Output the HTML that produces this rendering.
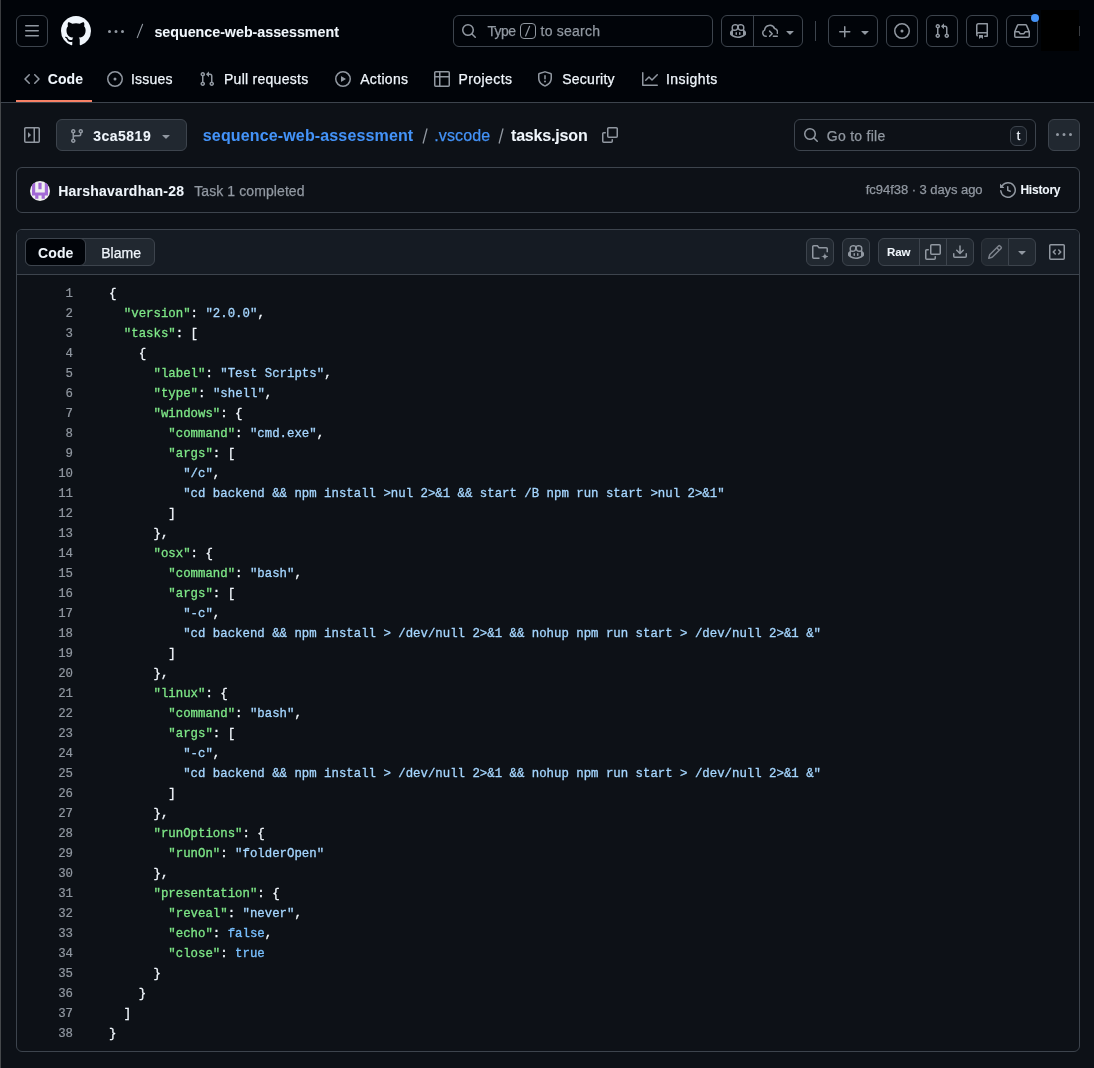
<!DOCTYPE html>
<html><head><meta charset="utf-8"><style>
html,body{margin:0;padding:0;}
body{width:1094px;height:1068px;background:#0d1117;position:relative;overflow:hidden;font-family:"Liberation Sans",sans-serif;}
.b,.t,.ic{position:absolute;}
.t{white-space:pre;}
.ln{position:absolute;left:40px;top:284px;width:33px;text-align:right;font-family:"Liberation Mono",monospace;font-size:12.37px;line-height:20px;color:#9198a1;-webkit-text-stroke:0.2px currentColor;}
.code{position:absolute;left:109px;top:284px;font-family:"Liberation Mono",monospace;font-size:12.37px;line-height:20px;color:#f0f6fc;white-space:pre;-webkit-text-stroke:0.3px currentColor;}
.k{color:#7ee787} .s{color:#a5d6ff} .c{color:#79c0ff}
.edge{position:absolute;left:0;top:0;width:1px;height:1068px;background:linear-gradient(#3b3d40 0,#3b3d40 102px,#45484b 102px)}
</style></head><body><div id="wrap" style="position:absolute;left:0;top:0;width:1094px;height:1068px;will-change:transform">
<div class="b" style="left:0;top:0;width:1094px;height:102px;background:#010409"></div><div class="b" style="left:0;top:102px;width:1094px;height:1px;background:#3d444d"></div><div class="b" style="left:16px;top:15px;width:32px;height:32px;background:transparent;border:1px solid #3d444d;border-radius:6px;box-sizing:border-box;"></div><svg class="ic" style="left:24px;top:23px;width:16px;height:16px;fill:#9198a1;color:#9198a1;" viewBox="0 0 16 16"><path d="M1 2.75A.75.75 0 0 1 1.75 2h12.5a.75.75 0 0 1 0 1.5H1.75A.75.75 0 0 1 1 2.75Zm0 5A.75.75 0 0 1 1.75 7h12.5a.75.75 0 0 1 0 1.5H1.75A.75.75 0 0 1 1 7.75ZM1.75 12h12.5a.75.75 0 0 1 0 1.5H1.75a.75.75 0 0 1 0-1.5Z"/></svg><svg class="ic" style="left:61px;top:16px;width:30px;height:30px;fill:#f0f6fc;color:#f0f6fc;" viewBox="0 0 16 16"><path d="M8 0c4.42 0 8 3.58 8 8a8.013 8.013 0 0 1-5.45 7.59c-.4.08-.55-.17-.55-.38 0-.27.01-1.13.01-2.2 0-.75-.25-1.230-.54-1.48 1.78-.2 3.65-.88 3.650-3.95 0-.88-.31-1.59-.82-2.15.08-.2.36-1.02-.08-2.12 0 0-.67-.22-2.2.82-.64-.18-1.32-.27-2-.27-.68 0-1.36.09-2 .27-1.53-1.03-2.2-.82-2.2-.82-.44 1.1-.16 1.92-.08 2.12-.51.56-.82 1.28-.82 2.15 0 3.06 1.86 3.75 3.64 3.95-.23.2-.44.55-.51 1.07-.46.21-1.610.55-2.33-.66-.15-.24-.6-.83-1.23-.82-.67.01-.27.38.01.53.34.19.73.9.82 1.13.16.45.68 1.31 2.69.94 0 .67.01 1.3.01 1.49 0 .21-.15.45-.55.38A7.995 7.995 0 0 1 0 8c0-4.42 3.58-8 8-8Z"/></svg><svg class="ic" style="left:108px;top:23.6px;width:16px;height:16px;fill:#9198a1;color:#9198a1;" viewBox="0 0 16 16"><path d="M8 9a1.5 1.5 0 1 0 0-3 1.5 1.5 0 0 0 0 3ZM1.5 9a1.5 1.5 0 1 0 0-3 1.5 1.5 0 0 0 0 3Zm13 0a1.5 1.5 0 1 0 0-3 1.5 1.5 0 0 0 0 3Z"/></svg><svg class="ic" style="left:130px;top:20px;width:20px;height:22px" viewBox="0 0 20 22"><path d="M7.3 17.6L12.6 4.3" stroke="#9198a1" stroke-width="1.1" stroke-linecap="round"/></svg><div id="t0" class="t" style="left:154.40px;top:25px;font-size:14.3px;line-height:14.3px;font-weight:700;color:#f0f6fc;letter-spacing:-0.027px;-webkit-text-stroke:0.05px currentColor;">sequence-web-assessment</div><div class="b" style="left:453px;top:15px;width:260px;height:32px;background:transparent;border:1px solid #3d444d;border-radius:6px;box-sizing:border-box;"></div><svg class="ic" style="left:461px;top:23px;width:16px;height:16px;fill:#9198a1;color:#9198a1;" viewBox="0 0 16 16"><path d="M10.68 11.74a6 6 0 0 1-7.922-8.982 6 6 0 0 1 8.982 7.922l3.04 3.04a.749.749 0 0 1-.326 1.275.749.749 0 0 1-.734-.215ZM11.5 7a4.499 4.499 0 1 0-8.997 0A4.499 4.499 0 0 0 11.5 7Z"/></svg><div id="t1" class="t" style="left:487.40px;top:24px;font-size:14px;line-height:14px;font-weight:400;color:#9198a1;letter-spacing:-0.600px;-webkit-text-stroke:0.25px currentColor;">Type</div><div class="b" style="left:520px;top:23px;width:16px;height:16px;background:transparent;border:1px solid #9198a1;border-radius:4px;box-sizing:border-box;"></div><svg class="ic" style="left:520px;top:23px;width:16px;height:16px" viewBox="0 0 16 16"><path d="M5.6 13L9.6 3.3" stroke="#9198a1" stroke-width="1.2" stroke-linecap="round"/></svg><div id="t2" class="t" style="left:540.60px;top:24px;font-size:14px;line-height:14px;font-weight:400;color:#9198a1;letter-spacing:0.225px;-webkit-text-stroke:0.25px currentColor;">to search</div><div class="b" style="left:721px;top:15px;width:82px;height:32px;background:transparent;border:1px solid #3d444d;border-radius:6px;box-sizing:border-box;"></div><div class="b" style="left:753px;top:15px;width:1px;height:32px;background:#3d444d"></div><svg class="ic" style="left:730px;top:23px;width:16px;height:16px;fill:#9198a1;color:#9198a1;" viewBox="0 0 16 16"><path d="M7.998 15.035c-4.562 0-7.873-2.914-7.998-3.749V9.338c.085-.628.677-1.686 1.588-2.065.013-.07.024-.143.036-.218.029-.183.06-.384.126-.612-.201-.508-.254-1.084-.254-1.656 0-.87.128-1.769.693-2.484.579-.733 1.494-1.124 2.724-1.261 1.206-.134 2.262.034 2.944.765.05.053.096.108.139.165.044-.057.094-.112.143-.165.682-.731 1.738-.899 2.944-.765 1.23.137 2.145.528 2.724 1.261.566.715.693 1.614.693 2.484 0 .572-.053 1.148-.254 1.656.066.228.098.429.126.612.012.076.024.148.037.218.924.385 1.522 1.471 1.591 2.095v1.872c0 .766-3.351 3.795-8.002 3.795Zm0-1.485c2.28 0 4.584-1.11 5.002-1.433V7.862l-.023-.116c-.49.21-1.075.291-1.727.291-1.146 0-2.059-.327-2.71-.991A3.222 3.222 0 0 1 8 6.303a3.24 3.24 0 0 1-.544.743c-.65.664-1.563.991-2.71.991-.652 0-1.236-.081-1.727-.291l-.023.116v4.255c.419.323 2.722 1.433 5.002 1.433ZM6.762 2.83c-.193-.206-.637-.413-1.682-.297-1.019.113-1.479.404-1.713.7-.247.312-.369.789-.369 1.554 0 .793.129 1.171.308 1.371.162.181.519.379 1.442.379.853 0 1.339-.235 1.638-.54.315-.322.527-.827.617-1.553.117-.935-.037-1.395-.241-1.614Zm4.155-.297c-1.044-.116-1.488.091-1.681.297-.204.219-.359.679-.242 1.614.091.726.303 1.231.618 1.553.299.305.784.54 1.638.54.922 0 1.28-.198 1.442-.379.179-.2.308-.578.308-1.371 0-.765-.123-1.242-.37-1.554-.233-.296-.693-.587-1.713-.7Z"/><path d="M6.25 9.037a.75.75 0 0 1 .75.75v1.501a.75.75 0 0 1-1.5 0V9.787a.75.75 0 0 1 .75-.75Zm4.25.75v1.501a.75.75 0 0 1-1.5 0V9.787a.75.75 0 0 1 1.5 0Z"/></svg><svg class="ic" style="left:762px;top:24px;width:16px;height:16px;fill:#9198a1;color:#9198a1;" viewBox="0 0 16 16"><g style="fill:none;stroke:currentColor;stroke-width:1.5;stroke-linecap:round;stroke-linejoin:round"><path d="M4.25 12.25A3.25 3.25 0 0 1 2.6 6.1A5.2 5.2 0 0 1 12.6 4.6A3.4 3.4 0 0 1 15.3 9.2"/><path d="M7.6 7.1L10.2 9.7L7.6 12.3"/><path d="M11.4 12.25H15.25"/></g></svg><svg class="ic" style="left:782px;top:24px;width:16px;height:16px;fill:#9198a1;color:#9198a1;" viewBox="0 0 16 16"><path d="m4.427 7.427 3.396 3.396a.25.25 0 0 0 .354 0l3.396-3.396A.25.25 0 0 0 11.396 7H4.604a.25.25 0 0 0-.177.427Z"/></svg><div class="b" style="left:815px;top:21px;width:1px;height:20px;background:#3d444d"></div><div class="b" style="left:828px;top:15px;width:50px;height:32px;background:transparent;border:1px solid #3d444d;border-radius:6px;box-sizing:border-box;"></div><svg class="ic" style="left:837px;top:24px;width:16px;height:16px;fill:#9198a1;color:#9198a1;" viewBox="0 0 16 16"><path d="M7.75 2a.75.75 0 0 1 .75.75V7h4.25a.75.75 0 0 1 0 1.5H8.5v4.25a.75.75 0 0 1-1.5 0V8.5H2.75a.75.75 0 0 1 0-1.5H7V2.75A.75.75 0 0 1 7.75 2Z"/></svg><svg class="ic" style="left:857px;top:24px;width:16px;height:16px;fill:#9198a1;color:#9198a1;" viewBox="0 0 16 16"><path d="m4.427 7.427 3.396 3.396a.25.25 0 0 0 .354 0l3.396-3.396A.25.25 0 0 0 11.396 7H4.604a.25.25 0 0 0-.177.427Z"/></svg><div class="b" style="left:886px;top:15px;width:32px;height:32px;background:transparent;border:1px solid #3d444d;border-radius:6px;box-sizing:border-box;"></div><svg class="ic" style="left:894px;top:23px;width:16px;height:16px;fill:#9198a1;color:#9198a1;" viewBox="0 0 16 16"><path d="M8 9.5a1.5 1.5 0 1 0 0-3 1.5 1.5 0 0 0 0 3Z"/><path d="M8 0a8 8 0 1 1 0 16A8 8 0 0 1 8 0ZM1.5 8a6.5 6.5 0 1 0 13 0 6.5 6.5 0 0 0-13 0Z"/></svg><div class="b" style="left:926px;top:15px;width:32px;height:32px;background:transparent;border:1px solid #3d444d;border-radius:6px;box-sizing:border-box;"></div><svg class="ic" style="left:934px;top:23px;width:16px;height:16px;fill:#9198a1;color:#9198a1;" viewBox="0 0 16 16"><path d="M1.5 3.25a2.25 2.25 0 1 1 3 2.122v5.256a2.251 2.251 0 1 1-1.5 0V5.372A2.25 2.25 0 0 1 1.5 3.25Zm5.677-.177L9.573.677A.25.25 0 0 1 10 .854V2.5h1A2.5 2.5 0 0 1 13.5 5v5.628a2.251 2.251 0 1 1-1.5 0V5a1 1 0 0 0-1-1h-1v1.646a.25.25 0 0 1-.427.177L7.177 3.427a.25.25 0 0 1 0-.354ZM3.75 2.5a.75.75 0 1 0 0 1.5.75.75 0 0 0 0-1.5Zm0 9.5a.75.75 0 1 0 0 1.5.75.75 0 0 0 0-1.5Zm8.25.75a.75.75 0 1 0 1.5 0 .75.75 0 0 0-1.5 0Z"/></svg><div class="b" style="left:966px;top:15px;width:32px;height:32px;background:transparent;border:1px solid #3d444d;border-radius:6px;box-sizing:border-box;"></div><svg class="ic" style="left:974px;top:23px;width:16px;height:16px;fill:#9198a1;color:#9198a1;" viewBox="0 0 16 16"><path d="M2 2.5A2.5 2.5 0 0 1 4.5 0h8.75a.75.75 0 0 1 .75.75v12.5a.75.75 0 0 1-.75.75h-2.5a.75.75 0 0 1 0-1.5h1.75v-2h-8a1 1 0 0 0-.714 1.7.75.75 0 1 1-1.072 1.05A2.495 2.495 0 0 1 2 11.5Zm10.5-1h-8a1 1 0 0 0-1 1v6.708A2.486 2.486 0 0 1 4.5 9h8ZM5 12.25a.25.25 0 0 1 .25-.25h3.5a.25.25 0 0 1 .25.25v3.25a.25.25 0 0 1-.4.2l-1.45-1.087a.249.249 0 0 0-.3 0L5.4 15.7a.25.25 0 0 1-.4-.2Z"/></svg><div class="b" style="left:1006px;top:15px;width:32px;height:32px;background:transparent;border:1px solid #3d444d;border-radius:6px;box-sizing:border-box;"></div><svg class="ic" style="left:1014px;top:23px;width:16px;height:16px;fill:#9198a1;color:#9198a1;" viewBox="0 0 16 16"><path d="M2.8 2.06A1.75 1.75 0 0 1 4.41 1h7.18c.7 0 1.333.417 1.61 1.06l2.74 6.395c.04.093.06.194.06.295v4.5A1.75 1.75 0 0 1 14.25 15H1.75A1.75 1.75 0 0 1 0 13.250v-4.5c0-.101.02-.202.06-.295Zm1.61.44a.25.25 0 0 0-.23.152L1.887 8H4.75a.75.75 0 0 1 .6.3L6.625 10h2.75l1.275-1.7a.75.75 0 0 1 .6-.3h2.863L11.82 2.652a.25.25 0 0 0-.23-.152Zm10.09 7h-2.875l-1.275 1.7a.75.75 0 0 1-.6.3h-3.5a.75.75 0 0 1-.6-.3L4.375 9.5H1.5v3.75c0 .138.112.25.25.25h12.5a.25.25 0 0 0 .25-.25Z"/></svg><div class="b" style="left:1031px;top:14px;width:8px;height:8px;background:#4493f8;border-radius:50%;"></div><div class="b" style="left:1041px;top:10px;width:38px;height:41px;background:#000"></div><div class="b" style="left:1079px;top:26px;width:1px;height:10px;background:#3a3d42"></div><svg class="ic" style="left:24px;top:71px;width:16px;height:16px;fill:#9198a1;color:#9198a1;" viewBox="0 0 16 16"><path d="m11.28 3.22 4.25 4.25a.75.75 0 0 1 0 1.060l-4.25 4.25a.749.749 0 0 1-1.275-.326.749.749 0 0 1 .215-.734L13.94 8l-3.72-3.72a.749.749 0 0 1 .326-1.275.749.749 0 0 1 .734.215Zm-6.56 0a.751.751 0 0 1 1.042.018.751.751 0 0 1 .018 1.042L2.06 8l3.72 3.72a.749.749 0 0 1-.326 1.275.749.749 0 0 1-.734-.215L.47 8.53a.75.75 0 0 1 0-1.06Z"/></svg><div id="t3" class="t" style="left:47.80px;top:72px;font-size:14px;line-height:14px;font-weight:700;color:#f0f6fc;letter-spacing:0.067px;-webkit-text-stroke:0.05px currentColor;">Code</div><svg class="ic" style="left:107px;top:71px;width:16px;height:16px;fill:#9198a1;color:#9198a1;" viewBox="0 0 16 16"><path d="M8 9.5a1.5 1.5 0 1 0 0-3 1.5 1.5 0 0 0 0 3Z"/><path d="M8 0a8 8 0 1 1 0 16A8 8 0 0 1 8 0ZM1.5 8a6.5 6.5 0 1 0 13 0 6.5 6.5 0 0 0-13 0Z"/></svg><div id="t4" class="t" style="left:131.00px;top:72px;font-size:14px;line-height:14px;font-weight:400;color:#f0f6fc;letter-spacing:0.200px;-webkit-text-stroke:0.25px currentColor;">Issues</div><svg class="ic" style="left:199px;top:71px;width:16px;height:16px;fill:#9198a1;color:#9198a1;" viewBox="0 0 16 16"><path d="M1.5 3.25a2.25 2.25 0 1 1 3 2.122v5.256a2.251 2.251 0 1 1-1.5 0V5.372A2.25 2.25 0 0 1 1.5 3.25Zm5.677-.177L9.573.677A.25.25 0 0 1 10 .854V2.5h1A2.5 2.5 0 0 1 13.5 5v5.628a2.251 2.251 0 1 1-1.5 0V5a1 1 0 0 0-1-1h-1v1.646a.25.25 0 0 1-.427.177L7.177 3.427a.25.25 0 0 1 0-.354ZM3.75 2.5a.75.75 0 1 0 0 1.5.75.75 0 0 0 0-1.5Zm0 9.5a.75.75 0 1 0 0 1.5.75.75 0 0 0 0-1.5Zm8.25.75a.75.75 0 1 0 1.5 0 .75.75 0 0 0-1.5 0Z"/></svg><div id="t5" class="t" style="left:224.00px;top:72px;font-size:14px;line-height:14px;font-weight:400;color:#f0f6fc;letter-spacing:0.267px;-webkit-text-stroke:0.25px currentColor;">Pull requests</div><svg class="ic" style="left:335px;top:71px;width:16px;height:16px;fill:#9198a1;color:#9198a1;" viewBox="0 0 16 16"><path d="M8 0a8 8 0 1 1 0 16A8 8 0 0 1 8 0ZM1.5 8a6.5 6.5 0 1 0 13 0 6.5 6.5 0 0 0-13 0Zm4.879-2.773 4.264 2.559a.25.25 0 0 1 0 .428l-4.264 2.559A.25.25 0 0 1 6 10.559V5.442a.25.25 0 0 1 .379-.215Z"/></svg><div id="t6" class="t" style="left:360.20px;top:72px;font-size:14px;line-height:14px;font-weight:400;color:#f0f6fc;letter-spacing:0.333px;-webkit-text-stroke:0.25px currentColor;">Actions</div><svg class="ic" style="left:434px;top:71px;width:16px;height:16px;fill:#9198a1;color:#9198a1;" viewBox="0 0 16 16"><path d="M0 1.75C0 .784.784 0 1.75 0h12.5C15.216 0 16 .784 16 1.75v12.5A1.75 1.75 0 0 1 14.25 16H1.75A1.75 1.75 0 0 1 0 14.25ZM6.5 6.5v8h7.75a.25.25 0 0 0 .25-.25V6.5Zm8-1.5V1.75a.25.25 0 0 0-.25-.25H6.5V5Zm-13 1.5v7.75c0 .138.112.25.25.25H5v-8ZM5 5V1.5H1.75a.25.25 0 0 0-.25.25V5Z"/></svg><div id="t7" class="t" style="left:458.50px;top:72px;font-size:14px;line-height:14px;font-weight:400;color:#f0f6fc;letter-spacing:0.429px;-webkit-text-stroke:0.25px currentColor;">Projects</div><svg class="ic" style="left:537px;top:71px;width:16px;height:16px;fill:#9198a1;color:#9198a1;" viewBox="0 0 16 16"><path d="M7.467.133a1.748 1.748 0 0 1 1.066 0l5.25 1.68A1.75 1.75 0 0 1 15 3.48V7c0 1.566-.32 3.182-1.303 4.682-.983 1.498-2.585 2.813-5.032 3.855a1.697 1.697 0 0 1-1.33 0c-2.447-1.042-4.049-2.357-5.032-3.855C1.32 10.182 1 8.566 1 7V3.48a1.755 1.755 0 0 1 1.217-1.667Zm.61 1.429a.25.25 0 0 0-.153 0l-5.25 1.68a.25.25 0 0 0-.174.238V7c0 1.358.275 2.666 1.057 3.86.784 1.194 2.121 2.34 4.366 3.297a.196.196 0 0 0 .154 0c2.245-.956 3.582-2.104 4.366-3.298C13.225 9.666 13.5 8.36 13.5 7V3.48a.251.251 0 0 0-.174-.237l-5.25-1.68ZM8.75 4.75v3a.75.75 0 0 1-1.5 0v-3a.75.75 0 0 1 1.5 0ZM9 10.5a1 1 0 1 1-2 0 1 1 0 0 1 2 0Z"/></svg><div id="t8" class="t" style="left:562.20px;top:72px;font-size:14px;line-height:14px;font-weight:400;color:#f0f6fc;letter-spacing:0.257px;-webkit-text-stroke:0.25px currentColor;">Security</div><svg class="ic" style="left:642px;top:71px;width:16px;height:16px;fill:#9198a1;color:#9198a1;" viewBox="0 0 16 16"><path d="M1.5 1.75V13.5h13.75a.75.75 0 0 1 0 1.5H.75a.75.75 0 0 1-.75-.75V1.75a.75.75 0 0 1 1.5 0Zm14.28 2.53-5.25 5.25a.75.75 0 0 1-1.06 0L7 7.060 4.28 9.78a.751.751 0 0 1-1.042-.018.751.751 0 0 1-.018-1.042l3.25-3.25a.75.75 0 0 1 1.06 0L10 7.94l4.72-4.72a.751.751 0 0 1 1.042.018.751.751 0 0 1 .018 1.042Z"/></svg><div id="t9" class="t" style="left:666.00px;top:72px;font-size:14px;line-height:14px;font-weight:400;color:#f0f6fc;letter-spacing:0.429px;-webkit-text-stroke:0.25px currentColor;">Insights</div><div class="b" style="left:16px;top:100px;width:76px;height:2px;background:#f78166"></div><svg class="ic" style="left:24px;top:127px;width:16px;height:16px;fill:#9198a1;color:#9198a1;" viewBox="0 0 16 16"><path d="M6.823 7.823a.25.25 0 0 1 0 .354l-2.396 2.396A.25.25 0 0 1 4 10.396V5.604a.25.25 0 0 1 .427-.177Z"/><path d="M1.75 0h12.5C15.216 0 16 .784 16 1.75v12.5A1.75 1.75 0 0 1 14.25 16H1.75A1.75 1.75 0 0 1 0 14.25V1.75C0 .784.784 0 1.75 0ZM1.5 1.75v12.5c0 .138.112.25.25.25H9.5v-13H1.75a.25.25 0 0 0-.25.25ZM11 14.5h3.25a.25.25 0 0 0 .25-.25V1.750a.25.25 0 0 0-.25-.25H11Z"/></svg><div class="b" style="left:56px;top:119px;width:131px;height:32px;background:#212830;border:1px solid #3d444d;border-radius:6px;box-sizing:border-box;"></div><svg class="ic" style="left:69px;top:128px;width:16px;height:16px;fill:#9198a1;color:#9198a1;" viewBox="0 0 16 16"><path d="M9.5 3.25a2.25 2.25 0 1 1 3 2.122V6A2.5 2.5 0 0 1 10 8.5H6a1 1 0 0 0-1 1v1.128a2.251 2.251 0 1 1-1.5 0V5.372a2.25 2.25 0 1 1 1.5 0v1.836A2.493 2.493 0 0 1 6 7h4a1 1 0 0 0 1-1v-.628A2.25 2.25 0 0 1 9.5 3.25Zm-6 0a.75.75 0 1 0 1.5 0 .75.75 0 0 0-1.5 0Zm8.25-.75a.75.75 0 1 0 0 1.5.75.75 0 0 0 0-1.5ZM4.25 12a.75.75 0 1 0 0 1.5.75.75 0 0 0 0-1.5Z"/></svg><div id="t10" class="t" style="left:93.20px;top:129px;font-size:14px;line-height:14px;font-weight:700;color:#f0f6fc;letter-spacing:0.500px;-webkit-text-stroke:0.05px currentColor;">3ca5819</div><svg class="ic" style="left:158px;top:127.5px;width:16px;height:16px;fill:#9198a1;color:#9198a1;" viewBox="0 0 16 16"><path d="m4.427 7.427 3.396 3.396a.25.25 0 0 0 .354 0l3.396-3.396A.25.25 0 0 0 11.396 7H4.604a.25.25 0 0 0-.177.427Z"/></svg><div id="t11" class="t" style="left:202.80px;top:128px;font-size:16px;line-height:16px;font-weight:700;color:#4493f8;letter-spacing:0.145px;-webkit-text-stroke:0.05px currentColor;">sequence-web-assessment</div><svg class="ic" style="left:417.5px;top:124px;width:14px;height:24px" viewBox="0 0 14 24"><path d="M5.2 19L8.9 5" stroke="#9198a1" stroke-width="1.3" stroke-linecap="round"/></svg><div id="t12" class="t" style="left:434.20px;top:128px;font-size:16px;line-height:16px;font-weight:400;color:#4493f8;letter-spacing:0.133px;-webkit-text-stroke:0.25px currentColor;">.vscode</div><svg class="ic" style="left:494px;top:124px;width:14px;height:24px" viewBox="0 0 14 24"><path d="M5.2 19L8.9 5" stroke="#9198a1" stroke-width="1.3" stroke-linecap="round"/></svg><div id="t13" class="t" style="left:511.00px;top:128px;font-size:16px;line-height:16px;font-weight:700;color:#f0f6fc;letter-spacing:-0.178px;-webkit-text-stroke:0.05px currentColor;">tasks.json</div><svg class="ic" style="left:602px;top:127px;width:16px;height:16px;fill:#9198a1;color:#9198a1;" viewBox="0 0 16 16"><path d="M0 6.75C0 5.784.784 5 1.75 5h1.5a.75.75 0 0 1 0 1.5h-1.5a.25.25 0 0 0-.25.25v7.5c0 .138.112.25.25.25h7.5a.25.25 0 0 0 .25-.25v-1.5a.75.75 0 0 1 1.5 0v1.5A1.75 1.75 0 0 1 9.25 16h-7.5A1.75 1.75 0 0 1 0 14.25Z"/><path d="M5 1.75C5 .784 5.784 0 6.75 0h7.5C15.216 0 16 .784 16 1.75v7.5A1.75 1.75 0 0 1 14.25 11h-7.5A1.75 1.75 0 0 1 5 9.25Zm1.75-.25a.25.25 0 0 0-.25.25v7.5c0 .138.112.25.25.25h7.5a.25.25 0 0 0 .25-.25v-7.5a.25.25 0 0 0-.25-.25Z"/></svg><div class="b" style="left:794px;top:119px;width:242px;height:32px;background:transparent;border:1px solid #3d444d;border-radius:6px;box-sizing:border-box;"></div><svg class="ic" style="left:803px;top:127px;width:16px;height:16px;fill:#9198a1;color:#9198a1;" viewBox="0 0 16 16"><path d="M10.68 11.74a6 6 0 0 1-7.922-8.982 6 6 0 0 1 8.982 7.922l3.04 3.04a.749.749 0 0 1-.326 1.275.749.749 0 0 1-.734-.215ZM11.5 7a4.499 4.499 0 1 0-8.997 0A4.499 4.499 0 0 0 11.5 7Z"/></svg><div id="t14" class="t" style="left:826.80px;top:129px;font-size:14px;line-height:14px;font-weight:400;color:#9198a1;letter-spacing:0.267px;-webkit-text-stroke:0.25px currentColor;">Go to file</div><div class="b" style="left:1010px;top:126px;width:17px;height:20px;background:#151b23;border:1px solid #3d444d;border-radius:6px;box-sizing:border-box;"></div><div id="t15" class="t" style="left:1016.80px;top:130px;font-size:12.5px;line-height:12.5px;font-weight:400;color:#f0f6fc;letter-spacing:0.000px;-webkit-text-stroke:0.25px currentColor;font-family:"Liberation Mono",monospace;">t</div><div class="b" style="left:1048px;top:119px;width:32px;height:32px;background:#212830;border:1px solid #3d444d;border-radius:6px;box-sizing:border-box;"></div><svg class="ic" style="left:1056px;top:127px;width:16px;height:16px;fill:#9198a1;color:#9198a1;" viewBox="0 0 16 16"><path d="M8 9a1.5 1.5 0 1 0 0-3 1.5 1.5 0 0 0 0 3ZM1.5 9a1.5 1.5 0 1 0 0-3 1.5 1.5 0 0 0 0 3Zm13 0a1.5 1.5 0 1 0 0-3 1.5 1.5 0 0 0 0 3Z"/></svg><div class="b" style="left:16px;top:167px;width:1064px;height:46px;background:transparent;border:1px solid #3d444d;border-radius:6px;box-sizing:border-box;"></div><svg class="ic" style="left:30px;top:181px;width:20px;height:20px" viewBox="0 0 20 20"><defs><clipPath id="cc"><circle cx="10" cy="10" r="10"/></clipPath></defs><g clip-path="url(#cc)"><rect width="20" height="20" fill="#f0f0f0"/><path d="M2.00 1.80h3.20v3.20h-3.20ZM8.40 1.80h3.20v3.20h-3.20ZM14.80 1.80h3.20v3.20h-3.20ZM2.00 5.00h3.20v3.20h-3.20ZM8.40 5.00h3.20v3.20h-3.20ZM14.80 5.00h3.20v3.20h-3.20ZM2.00 8.20h3.20v3.20h-3.20ZM14.80 8.20h3.20v3.20h-3.20ZM2.00 11.40h3.20v3.20h-3.20ZM5.20 11.40h3.20v3.20h-3.20ZM8.40 11.40h3.20v3.20h-3.20ZM11.60 11.40h3.20v3.20h-3.20ZM14.80 11.40h3.20v3.20h-3.20ZM5.20 14.60h3.20v3.20h-3.20ZM11.60 14.60h3.20v3.20h-3.20Z" fill="#a36ad6"/></g></svg><div id="t16" class="t" style="left:58.20px;top:184px;font-size:14px;line-height:14px;font-weight:700;color:#f0f6fc;letter-spacing:0.240px;-webkit-text-stroke:0.05px currentColor;">Harshavardhan-28</div><div id="t17" class="t" style="left:194.20px;top:184px;font-size:14px;line-height:14px;font-weight:400;color:#9198a1;letter-spacing:0.093px;-webkit-text-stroke:0.25px currentColor;">Task 1 completed</div><div id="t18" class="t" style="left:865.80px;top:183px;font-size:13px;line-height:13px;font-weight:400;color:#9198a1;letter-spacing:-0.053px;-webkit-text-stroke:0.25px currentColor;">fc94f38 · 3 days ago</div><svg class="ic" style="left:1000px;top:182px;width:16px;height:16px;fill:#9198a1;color:#9198a1;" viewBox="0 0 16 16"><path d="m.427 1.927 1.215 1.215a8.002 8.002 0 1 1-1.6 5.685.75.75 0 1 1 1.493-.154 6.5 6.5 0 1 0 1.18-4.458l1.358 1.358A.25.25 0 0 1 3.896 6H.25A.25.25 0 0 1 0 5.75V2.104a.25.25 0 0 1 .427-.177ZM7.75 4a.75.75 0 0 1 .75.75v2.992l2.028.812a.75.75 0 0 1-.557 1.392l-2.5-1A.751.751 0 0 1 7 8.25v-3.5A.75.75 0 0 1 7.75 4Z"/></svg><div id="t19" class="t" style="left:1020.40px;top:184px;font-size:12px;line-height:12px;font-weight:700;color:#f0f6fc;letter-spacing:-0.200px;-webkit-text-stroke:0.05px currentColor;">History</div><div class="b" style="left:16px;top:229px;width:1064px;height:823px;background:#0d1117;border:1px solid #3d444d;border-radius:6px;box-sizing:border-box;overflow:hidden"></div><div class="b" style="left:17px;top:230px;width:1062px;height:44px;background:#151b23;border-radius:5px 5px 0 0"></div><div class="b" style="left:16px;top:274px;width:1064px;height:1px;background:#3d444d"></div><div class="b" style="left:25px;top:238px;width:130px;height:28px;background:#212830;border:1px solid #3d444d;border-radius:6px;box-sizing:border-box;"></div><div class="b" style="left:25px;top:238px;width:61px;height:28px;background:#010409;border:1px solid #3d444d;border-radius:6px;box-sizing:border-box;"></div><div id="t20" class="t" style="left:38.00px;top:246px;font-size:14px;line-height:14px;font-weight:700;color:#f0f6fc;letter-spacing:0.133px;-webkit-text-stroke:0.05px currentColor;">Code</div><div id="t21" class="t" style="left:101.20px;top:246px;font-size:14px;line-height:14px;font-weight:400;color:#f0f6fc;letter-spacing:0.050px;-webkit-text-stroke:0.25px currentColor;">Blame</div><div class="b" style="left:806px;top:238px;width:28px;height:28px;background:#212830;border:1px solid #3d444d;border-radius:6px;box-sizing:border-box;"></div><svg class="ic" style="left:812px;top:244px;width:16px;height:16px;fill:#9198a1;color:#9198a1;" viewBox="0 0 16 16"><path d="M7.5 14.25H1.75a1 1 0 0 1-1-1V2.75a1 1 0 0 1 1-1H5.4l1.6 2h7.25a1 1 0 0 1 1 1V8.2" style="fill:none;stroke:currentColor;stroke-width:1.5"/><path d="M12.9 8.5C13.1 11.2 14.1 12.2 16.9 12.5 14.1 12.8 13.1 13.8 12.9 16.5 12.7 13.8 11.7 12.8 8.9 12.5 11.7 12.2 12.7 11.2 12.9 8.5Z"/></svg><div class="b" style="left:842px;top:238px;width:28px;height:28px;background:#212830;border:1px solid #3d444d;border-radius:6px;box-sizing:border-box;"></div><svg class="ic" style="left:848px;top:244px;width:16px;height:16px;fill:#9198a1;color:#9198a1;" viewBox="0 0 16 16"><path d="M7.998 15.035c-4.562 0-7.873-2.914-7.998-3.749V9.338c.085-.628.677-1.686 1.588-2.065.013-.07.024-.143.036-.218.029-.183.06-.384.126-.612-.201-.508-.254-1.084-.254-1.656 0-.87.128-1.769.693-2.484.579-.733 1.494-1.124 2.724-1.261 1.206-.134 2.262.034 2.944.765.05.053.096.108.139.165.044-.057.094-.112.143-.165.682-.731 1.738-.899 2.944-.765 1.23.137 2.145.528 2.724 1.261.566.715.693 1.614.693 2.484 0 .572-.053 1.148-.254 1.656.066.228.098.429.126.612.012.076.024.148.037.218.924.385 1.522 1.471 1.591 2.095v1.872c0 .766-3.351 3.795-8.002 3.795Zm0-1.485c2.28 0 4.584-1.11 5.002-1.433V7.862l-.023-.116c-.49.21-1.075.291-1.727.291-1.146 0-2.059-.327-2.71-.991A3.222 3.222 0 0 1 8 6.303a3.24 3.24 0 0 1-.544.743c-.65.664-1.563.991-2.71.991-.652 0-1.236-.081-1.727-.291l-.023.116v4.255c.419.323 2.722 1.433 5.002 1.433ZM6.762 2.83c-.193-.206-.637-.413-1.682-.297-1.019.113-1.479.404-1.713.7-.247.312-.369.789-.369 1.554 0 .793.129 1.171.308 1.371.162.181.519.379 1.442.379.853 0 1.339-.235 1.638-.54.315-.322.527-.827.617-1.553.117-.935-.037-1.395-.241-1.614Zm4.155-.297c-1.044-.116-1.488.091-1.681.297-.204.219-.359.679-.242 1.614.091.726.303 1.231.618 1.553.299.305.784.54 1.638.54.922 0 1.28-.198 1.442-.379.179-.2.308-.578.308-1.371 0-.765-.123-1.242-.37-1.554-.233-.296-.693-.587-1.713-.7Z"/><path d="M6.25 9.037a.75.75 0 0 1 .75.75v1.501a.75.75 0 0 1-1.5 0V9.787a.75.75 0 0 1 .75-.75Zm4.25.75v1.501a.75.75 0 0 1-1.5 0V9.787a.75.75 0 0 1 1.5 0Z"/></svg><div class="b" style="left:878px;top:238px;width:96px;height:28px;background:#212830;border:1px solid #3d444d;border-radius:6px;box-sizing:border-box;"></div><div class="b" style="left:919px;top:238px;width:1px;height:28px;background:#3d444d"></div><div class="b" style="left:946px;top:238px;width:1px;height:28px;background:#3d444d"></div><div id="t22" class="t" style="left:887.00px;top:246.5px;font-size:11.5px;line-height:11.5px;font-weight:700;color:#f0f6fc;letter-spacing:-0.100px;-webkit-text-stroke:0.05px currentColor;">Raw</div><svg class="ic" style="left:925px;top:244px;width:16px;height:16px;fill:#9198a1;color:#9198a1;" viewBox="0 0 16 16"><path d="M0 6.75C0 5.784.784 5 1.75 5h1.5a.75.75 0 0 1 0 1.5h-1.5a.25.25 0 0 0-.25.25v7.5c0 .138.112.25.25.25h7.5a.25.25 0 0 0 .25-.25v-1.5a.75.75 0 0 1 1.5 0v1.5A1.75 1.75 0 0 1 9.25 16h-7.5A1.75 1.75 0 0 1 0 14.25Z"/><path d="M5 1.75C5 .784 5.784 0 6.75 0h7.5C15.216 0 16 .784 16 1.75v7.5A1.75 1.75 0 0 1 14.25 11h-7.5A1.75 1.75 0 0 1 5 9.25Zm1.75-.25a.25.25 0 0 0-.25.25v7.5c0 .138.112.25.25.25h7.5a.25.25 0 0 0 .25-.25v-7.5a.25.25 0 0 0-.25-.25Z"/></svg><svg class="ic" style="left:952px;top:244px;width:16px;height:16px;fill:#9198a1;color:#9198a1;" viewBox="0 0 16 16"><path d="M2.75 14A1.75 1.75 0 0 1 1 12.25v-2.5a.75.75 0 0 1 1.5 0v2.5c0 .138.112.25.25.25h10.5a.25.25 0 0 0 .25-.25v-2.5a.75.75 0 0 1 1.5 0v2.5A1.75 1.75 0 0 1 13.25 14Z"/><path d="M7.25 7.689V2a.75.75 0 0 1 1.5 0v5.689l1.97-1.969a.749.749 0 0 1 1.275.326.749.749 0 0 1-.215.734l-3.25 3.25a.75.75 0 0 1-1.06 0L4.22 6.78a.749.749 0 0 1 .326-1.275.749.749 0 0 1 .734.215l1.97 1.969Z"/></svg><div class="b" style="left:981px;top:238px;width:28px;height:28px;background:#212830;border:1px solid #30363d;border-radius:6px;box-sizing:border-box;border-radius:6px 0 0 6px"></div><div class="b" style="left:1008px;top:238px;width:28px;height:28px;background:#212830;border:1px solid #3d444d;border-radius:6px;box-sizing:border-box;border-radius:0 6px 6px 0"></div><svg class="ic" style="left:987px;top:244px;width:16px;height:16px;fill:#7d838c;color:#7d838c;" viewBox="0 0 16 16"><path d="M11.013 1.427a1.75 1.75 0 0 1 2.474 0l1.086 1.086a1.75 1.75 0 0 1 0 2.474l-8.61 8.61c-.21.21-.47.364-.756.445l-3.251.93a.75.75 0 0 1-.927-.928l.929-3.25c.081-.286.235-.547.445-.758l8.61-8.61Zm.176 4.823L9.75 4.81l-6.286 6.287a.253.253 0 0 0-.064.108l-.558 1.953 1.953-.558a.253.253 0 0 0 .108-.064Zm1.238-3.763a.25.25 0 0 0-.354 0L10.811 3.75l1.439 1.44 1.263-1.263a.25.25 0 0 0 0-.354Z"/></svg><svg class="ic" style="left:1014px;top:244px;width:16px;height:16px;fill:#9198a1;color:#9198a1;" viewBox="0 0 16 16"><path d="m4.427 7.427 3.396 3.396a.25.25 0 0 0 .354 0l3.396-3.396A.25.25 0 0 0 11.396 7H4.604a.25.25 0 0 0-.177.427Z"/></svg><svg class="ic" style="left:1049px;top:244px;width:16px;height:16px;fill:#9198a1;color:#9198a1;" viewBox="0 0 16 16"><path d="M0 1.75C0 .784.784 0 1.75 0h12.5C15.216 0 16 .784 16 1.75v12.5A1.75 1.75 0 0 1 14.25 16H1.75A1.75 1.75 0 0 1 0 14.25Zm1.75-.25a.25.25 0 0 0-.25.25v12.5c0 .138.112.25.25.25h12.5a.25.25 0 0 0 .25-.25V1.75a.25.25 0 0 0-.25-.25Zm7.47 3.97a.75.75 0 0 1 1.06 0l2 2a.75.75 0 0 1 0 1.06l-2 2a.749.749 0 0 1-1.275-.326.749.749 0 0 1 .215-.734L10.69 8 9.22 6.53a.75.75 0 0 1 0-1.06ZM6.78 6.53 5.31 8l1.47 1.47a.749.749 0 0 1-.326 1.275.749.749 0 0 1-.734-.215l-2-2a.75.75 0 0 1 0-1.06l2-2a.751.751 0 0 1 1.042.018.751.751 0 0 1 .018 1.042Z"/></svg><div class="ln"><div>1</div><div>2</div><div>3</div><div>4</div><div>5</div><div>6</div><div>7</div><div>8</div><div>9</div><div>10</div><div>11</div><div>12</div><div>13</div><div>14</div><div>15</div><div>16</div><div>17</div><div>18</div><div>19</div><div>20</div><div>21</div><div>22</div><div>23</div><div>24</div><div>25</div><div>26</div><div>27</div><div>28</div><div>29</div><div>30</div><div>31</div><div>32</div><div>33</div><div>34</div><div>35</div><div>36</div><div>37</div><div>38</div></div><div class="code"><div>{</div><div>  <span class="k">&quot;version&quot;</span>: <span class="s">&quot;2.0.0&quot;</span>,</div><div>  <span class="k">&quot;tasks&quot;</span>: [</div><div>    {</div><div>      <span class="k">&quot;label&quot;</span>: <span class="s">&quot;Test Scripts&quot;</span>,</div><div>      <span class="k">&quot;type&quot;</span>: <span class="s">&quot;shell&quot;</span>,</div><div>      <span class="k">&quot;windows&quot;</span>: {</div><div>        <span class="k">&quot;command&quot;</span>: <span class="s">&quot;cmd.exe&quot;</span>,</div><div>        <span class="k">&quot;args&quot;</span>: [</div><div>          <span class="s">&quot;/c&quot;</span>,</div><div>          <span class="s">&quot;cd backend &amp;&amp; npm install &gt;nul 2&gt;&amp;1 &amp;&amp; start /B npm run start &gt;nul 2&gt;&amp;1&quot;</span></div><div>        ]</div><div>      },</div><div>      <span class="k">&quot;osx&quot;</span>: {</div><div>        <span class="k">&quot;command&quot;</span>: <span class="s">&quot;bash&quot;</span>,</div><div>        <span class="k">&quot;args&quot;</span>: [</div><div>          <span class="s">&quot;-c&quot;</span>,</div><div>          <span class="s">&quot;cd backend &amp;&amp; npm install &gt; /dev/null 2&gt;&amp;1 &amp;&amp; nohup npm run start &gt; /dev/null 2&gt;&amp;1 &amp;&quot;</span></div><div>        ]</div><div>      },</div><div>      <span class="k">&quot;linux&quot;</span>: {</div><div>        <span class="k">&quot;command&quot;</span>: <span class="s">&quot;bash&quot;</span>,</div><div>        <span class="k">&quot;args&quot;</span>: [</div><div>          <span class="s">&quot;-c&quot;</span>,</div><div>          <span class="s">&quot;cd backend &amp;&amp; npm install &gt; /dev/null 2&gt;&amp;1 &amp;&amp; nohup npm run start &gt; /dev/null 2&gt;&amp;1 &amp;&quot;</span></div><div>        ]</div><div>      },</div><div>      <span class="k">&quot;runOptions&quot;</span>: {</div><div>        <span class="k">&quot;runOn&quot;</span>: <span class="s">&quot;folderOpen&quot;</span></div><div>      },</div><div>      <span class="k">&quot;presentation&quot;</span>: {</div><div>        <span class="k">&quot;reveal&quot;</span>: <span class="s">&quot;never&quot;</span>,</div><div>        <span class="k">&quot;echo&quot;</span>: <span class="c">false</span>,</div><div>        <span class="k">&quot;close&quot;</span>: <span class="c">true</span></div><div>      }</div><div>    }</div><div>  ]</div><div>}</div></div>
<div class="edge"></div>
</div></body></html>
